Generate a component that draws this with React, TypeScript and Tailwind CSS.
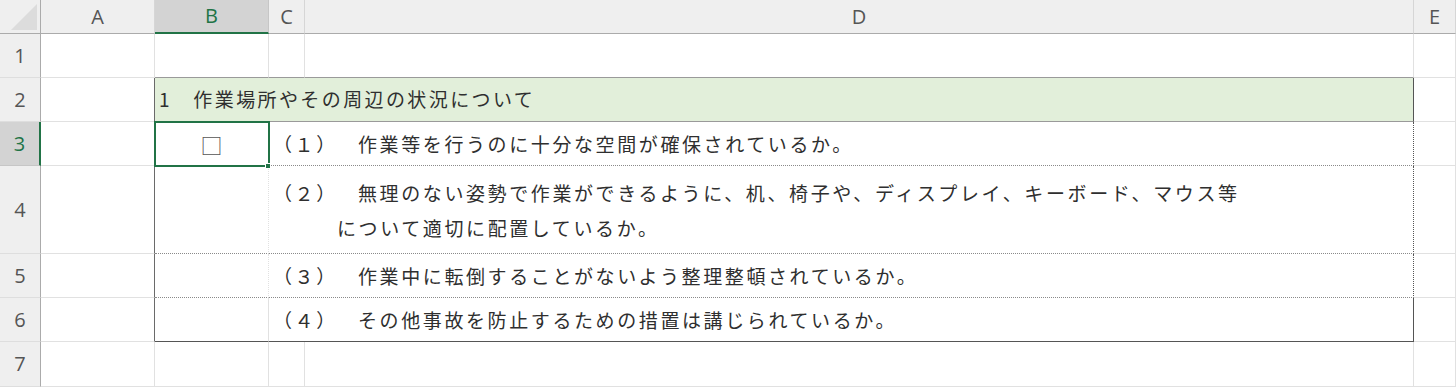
import React from "react";

const jp = { fontFamily: '"Noto Sans CJK JP", "Noto Sans", sans-serif' };
const ui = { fontFamily: '"Open Sans", "Liberation Sans", sans-serif' };

const items = [
  { no: "（１）", lines: ["作業等を行うのに十分な空間が確保されているか。"] },
  {
    no: "（２）",
    lines: [
      "無理のない姿勢で作業ができるように、机、椅子や、ディスプレイ、キーボード、マウス等",
      "について適切に配置しているか。",
    ],
  },
  { no: "（３）", lines: ["作業中に転倒することがないよう整理整頓されているか。"] },
  { no: "（４）", lines: ["その他事故を防止するための措置は講じられているか。"] },
];

function ColHead({ label, active }: { label: string; active?: boolean }) {
  return (
    <div
      style={ui}
      className={
        active
          ? "flex items-center justify-center border-r border-b-2 border-r-[#c6c6c6] border-b-[#217346] bg-[#d3d3d3] text-[20px] text-[#217346]"
          : "flex items-center justify-center border-r border-b border-r-[#d6d6d6] border-b-[#ababab] bg-[#efefef] text-[20px] text-[#555]"
      }
    >
      {label}
    </div>
  );
}

function RowHead({ n, active }: { n: number; active?: boolean }) {
  return (
    <div
      style={ui}
      className={
        active
          ? "flex items-center justify-center border-r-2 border-b border-r-[#217346] border-b-[#c6c6c6] bg-[#d3d3d3] text-[20px] text-[#217346]"
          : "flex items-center justify-center border-r border-b border-r-[#ababab] border-b-[#dedede] bg-[#efefef] text-[20px] text-[#555]"
      }
    >
      {n}
    </div>
  );
}

// plain empty cell with gridlines
function Cell({ className = "" }: { className?: string }) {
  return <div className={"border-r border-b border-[#e1e1e1] bg-white " + className} />;
}

export default function App() {
  return (
    <div className="h-[387px] w-[1456px] overflow-hidden bg-white">
      <div className="grid grid-cols-[41px_114px_114px_36px_1109px_42px] grid-rows-[34px_44px_44px_44px_88px_44px_44px_45px]">
        {/* header row */}
        <div className="relative border-r border-b border-r-[#ababab] border-b-[#ababab] bg-[#efefef]">
          <svg className="absolute right-[3px] bottom-[3px]" width="26" height="26" viewBox="0 0 26 26">
            <polygon points="26,0 26,26 0,26" fill="#dcdcdc" />
          </svg>
        </div>
        <ColHead label="A" />
        <ColHead label="B" active />
        <ColHead label="C" />
        <ColHead label="D" />
        <ColHead label="E" />

        {/* row 1 */}
        <RowHead n={1} />
        <Cell />
        <Cell className="!border-b-[#9a9a9a]" />
        <Cell className="!border-b-[#9a9a9a]" />
        <Cell className="!border-b-[#9a9a9a]" />
        <Cell />

        {/* row 2 */}
        <RowHead n={2} />
        <Cell className="!border-r-[#6a6a6a]" />
        <div
          style={jp}
          className="col-span-3 flex items-center border-r border-b border-r-[#555] border-b-[#9a9a9a] bg-[#e2efda] pl-[4px] text-[19px] tracking-[2.4px] text-[#2f2f2f]"
        >
          1　作業場所やその周辺の状況について
        </div>
        <Cell />

        {/* rows 3-6 */}
        {items.map((it, i) => {
          const last = i === items.length - 1;
          const bottom = last ? "border-b border-solid border-b-[#555]" : "border-b border-dotted border-b-[#8a8a8a]";
          return (
            <React.Fragment key={it.no}>
              <RowHead n={i + 3} active={i === 0} />
              <Cell className="!border-r-[#6a6a6a]" />
              <div className={"relative flex items-center justify-center border-r border-r-[#e1e1e1] " + bottom}>
                {i === 0 && (
                  <>
                    <span style={jp} className="text-[22px] leading-none text-[#555]">
                      □
                    </span>
                    <div className="absolute -top-[1px] -left-[1px] z-10 h-[46px] w-[116px] border-2 border-[#217346]" />
                    <div className="absolute -right-[3px] -bottom-[4px] z-20 h-[6px] w-[6px] border border-white bg-[#217346]" />
                  </>
                )}
              </div>
              <div
                style={jp}
                className={
                  "col-span-2 flex flex-col justify-center border-r border-r-[#555] pl-[4px] text-[19px] leading-[35px] tracking-[2.6px] text-[#2f2f2f] " +
                  bottom
                }
              >
                {it.lines.map((l, j) => (
                  <div key={j} className="whitespace-nowrap">
                    {j === 0 ? (
                      <>
                        <span className="inline-block w-[85px]">{it.no}</span>
                        {l}
                      </>
                    ) : (
                      <span className="pl-[64px]">{l}</span>
                    )}
                  </div>
                ))}
              </div>
              <Cell />
            </React.Fragment>
          );
        })}

        {/* row 7 */}
        <RowHead n={7} />
        <Cell />
        <Cell />
        <Cell />
        <Cell />
        <Cell />
      </div>
    </div>
  );
}
